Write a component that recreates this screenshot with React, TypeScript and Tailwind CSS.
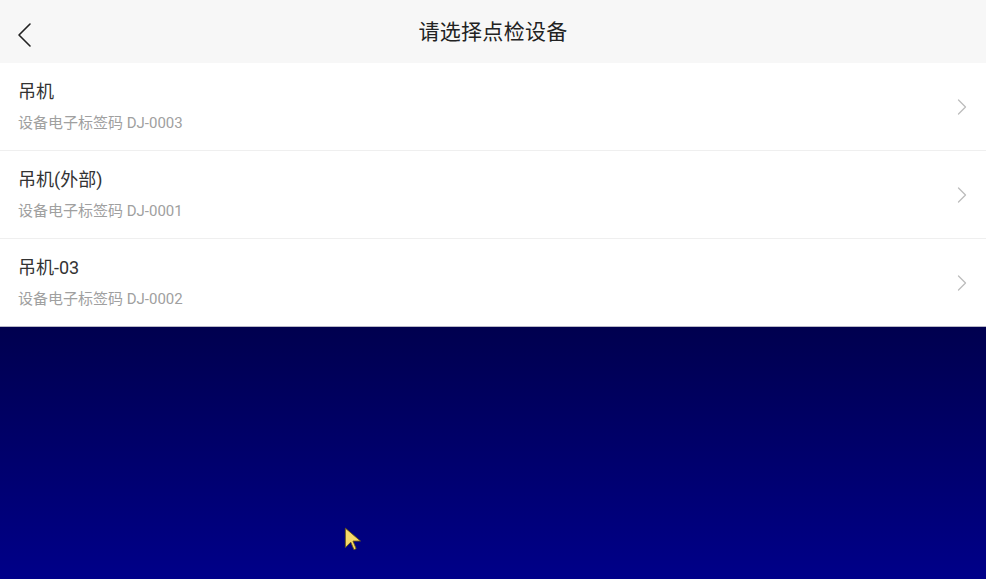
import React from "react";

const items = [
  { name: "吊机", code: "DJ-0003" },
  { name: "吊机(外部)", code: "DJ-0001" },
  { name: "吊机-03", code: "DJ-0002" },
];

export default function App() {
  return (
    <div
      className="w-[986px] h-[579px] flex flex-col overflow-hidden"
      style={{ fontFamily: 'Roboto, "Noto Sans CJK SC", sans-serif' }}
    >
      <div className="h-[63px] bg-[#f7f7f7] relative flex items-center justify-center shrink-0">
        <svg
          className="absolute left-[16px] top-[22px]"
          width="18"
          height="26"
          viewBox="0 0 18 26"
          fill="none"
        >
          <path d="M14 2 L3 13 L14 24" stroke="#222" strokeWidth="1.6" strokeLinecap="round" strokeLinejoin="round" />
        </svg>
        <span className="text-[21px] text-[#222] tracking-[0.3px] mt-[3px]">请选择点检设备</span>
      </div>
      <div className="bg-white flex flex-col shrink-0">
        {items.map((it, i) => (
          <div
            key={i}
            className={`flex items-center pl-[18px] pr-[18px] ${i < items.length - 1 ? "h-[88px] border-b border-[#efefef]" : "h-[87px]"}`}
          >
            <div className="flex-1 flex flex-col">
              <span className="text-[18px] leading-[24px] text-[#333]">{it.name}</span>
              <span className="text-[15px] leading-[20px] text-[#a0a0a0] mt-[9px]">设备电子标签码 {it.code}</span>
            </div>
            <svg width="10" height="16" viewBox="0 0 10 16" fill="none" className="mr-[1px]">
              <path d="M1.5 1 L8.5 8 L1.5 15" stroke="#bdbdbd" strokeWidth="1.3" strokeLinecap="round" strokeLinejoin="round" />
            </svg>
          </div>
        ))}
      </div>
      <div className="h-[1px] bg-[#b8b8c8] shrink-0" />
      <div className="flex-1 bg-gradient-to-b from-[#00004f] to-[#000089] relative">
        <svg className="absolute left-[343px] top-[199px]" width="22" height="28" viewBox="0 0 20 26">
          <path d="M2 2 L2 20 L7 15 L10 22 L12 21 L9 14 L16 14 Z" fill="#f5d86a" stroke="#6b5a10" strokeWidth="0.8" strokeLinejoin="round" />
        </svg>
      </div>
    </div>
  );
}
